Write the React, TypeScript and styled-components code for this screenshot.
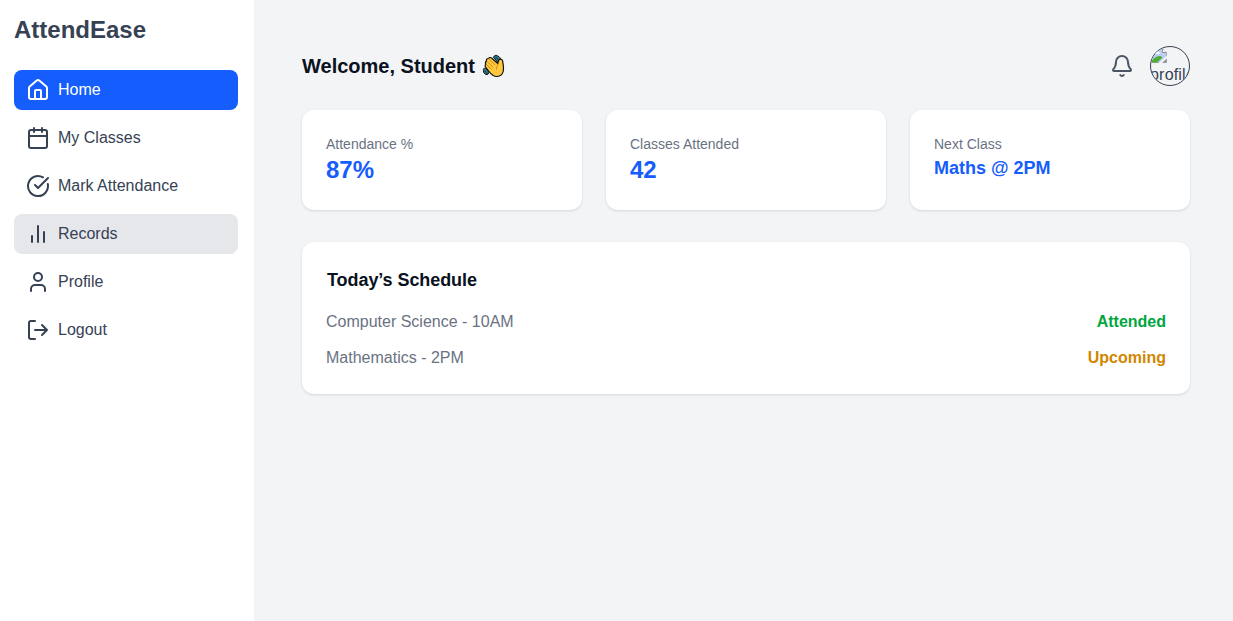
import React from "react";
import styled, { createGlobalStyle } from "styled-components";

const GlobalStyle = createGlobalStyle`
  *, *::before, *::after { box-sizing: border-box; }
  body {
    margin: 0;
    background: #f3f4f6;
    font-family: "Liberation Sans", Arial, sans-serif;
    font-size: 16px;
    line-height: 24px;
    color: #0a1120;
  }
  h1, h2, h3, p, ul { margin: 0; padding: 0; }
`;

const Layout = styled.div`
  display: flex;
  min-height: 100vh;
`;

const Sidebar = styled.aside`
  width: 254px;
  flex-shrink: 0;
  padding: 14px 16px 16px 14px;
  background: #fff;
  color: #364153;
`;

const Brand = styled.h1`
  font-size: 24px;
  line-height: 32px;
  font-weight: 700;
  margin-bottom: 24px;
`;

const Nav = styled.nav`
  display: flex;
  flex-direction: column;
  gap: 8px;
`;

const NavItem = styled.a<{ $state?: "active" | "hover" }>`
  display: flex;
  align-items: center;
  gap: 8px;
  height: 40px;
  padding: 0 12px;
  border-radius: 8px;
  color: ${(p) => (p.$state === "active" ? "#fff" : "#364153")};
  background: ${(p) =>
    p.$state === "active" ? "#155dfc" : p.$state === "hover" ? "#e5e7eb" : "transparent"};
`;

const NavLabel = styled.span`
  padding-bottom: 1px;
`;

const Icon = styled.svg.attrs({
  width: 24,
  height: 24,
  viewBox: "0 0 24 24",
  fill: "none",
  stroke: "currentColor",
  strokeWidth: 2,
  strokeLinecap: "round",
  strokeLinejoin: "round",
})`
  display: block;
  flex-shrink: 0;
`;

const Main = styled.main`
  flex: 1;
  padding: 46px 43px 48px 48px;
`;

const Header = styled.header`
  display: flex;
  justify-content: space-between;
  align-items: center;
  height: 40px;
  margin-bottom: 24px;
`;

const Greeting = styled.h2`
  display: flex;
  align-items: center;
  gap: 6px;
  font-size: 20px;
  line-height: 28px;
  font-weight: 700;
`;

const Wave = styled.svg`
  display: block;
  width: 24px;
  height: 24px;
`;

const Actions = styled.div`
  display: flex;
  align-items: center;
  gap: 16px;
  color: #4a5565;
`;

const Avatar = styled.div`
  width: 40px;
  height: 40px;
  border: 1px solid #364153;
  border-radius: 50%;
  overflow: hidden;
  color: #364153;
  line-height: 22px;
`;

const BrokenImage = styled.svg`
  display: block;
  width: 16px;
  height: 16px;
  margin-top: 1px;
`;

const AvatarAlt = styled.span`
  display: block;
  margin-left: -1px;
  letter-spacing: 0.2px;
`;

const Stats = styled.section`
  display: grid;
  grid-template-columns: repeat(3, 1fr);
  gap: 24px;
  margin-bottom: 32px;
`;

const Card = styled.div`
  background: #fff;
  border-radius: 12px;
  padding: 24px;
  box-shadow: 0 1px 3px rgba(0, 0, 0, 0.1), 0 1px 2px -1px rgba(0, 0, 0, 0.1);
`;

const StatCard = styled(Card)`
  height: 100px;
`;

const StatLabel = styled.p`
  font-size: 14px;
  line-height: 20px;
  color: #6a7282;
`;

const StatValue = styled.p<{ $small?: boolean }>`
  font-size: ${(p) => (p.$small ? 18 : 24)}px;
  line-height: ${(p) => (p.$small ? 28 : 32)}px;
  font-weight: 700;
  color: #155dfc;
`;

const ScheduleCard = styled(Card)`
  height: 152px;
`;

const CardTitle = styled.h3`
  font-size: 18px;
  line-height: 28px;
  font-weight: 700;
  letter-spacing: -0.07px;
  margin-bottom: 16px;
  padding-left: 1px;
`;

const ScheduleList = styled.ul`
  list-style: none;
  display: flex;
  flex-direction: column;
  gap: 12px;
`;

const ScheduleRow = styled.li`
  display: flex;
  justify-content: space-between;
  color: #6a7282;
`;

const Status = styled.span<{ $done?: boolean }>`
  font-weight: 700;
  color: ${(p) => (p.$done ? "#00a63e" : "#d08700")};
`;

const navItems: { label: string; state?: "active" | "hover"; icon: React.ReactNode }[] = [
  {
    label: "Home",
    state: "active",
    icon: (
      <>
        <path d="M15 21v-8a1 1 0 0 0-1-1h-4a1 1 0 0 0-1 1v8" />
        <path d="M3 10a2 2 0 0 1 .709-1.528l7-5.999a2 2 0 0 1 2.582 0l7 5.999A2 2 0 0 1 21 10v9a2 2 0 0 1-2 2H5a2 2 0 0 1-2-2z" />
      </>
    ),
  },
  {
    label: "My Classes",
    icon: (
      <>
        <path d="M8 2v4M16 2v4M3 10h18" />
        <rect width="18" height="18" x="3" y="4" rx="2" />
      </>
    ),
  },
  {
    label: "Mark Attendance",
    icon: (
      <>
        <path d="M21.801 10A10 10 0 1 1 17 3.335" />
        <path d="m9 11 3 3L22 4" />
      </>
    ),
  },
  { label: "Records", state: "hover", icon: <path d="M18 20V10M12 20V4M6 20v-6" /> },
  {
    label: "Profile",
    icon: (
      <>
        <path d="M19 21v-2a4 4 0 0 0-4-4H9a4 4 0 0 0-4 4v2" />
        <circle cx="12" cy="7" r="4" />
      </>
    ),
  },
  {
    label: "Logout",
    icon: <path d="M9 21H5a2 2 0 0 1-2-2V5a2 2 0 0 1 2-2h4M16 17l5-5-5-5M21 12H9" />,
  },
];

const schedule = [
  { name: "Computer Science - 10AM", status: "Attended", done: true },
  { name: "Mathematics - 2PM", status: "Upcoming", done: false },
];

function WavingHand() {
  return (
    <Wave viewBox="0 0 24 24" role="img" aria-label="waving hand">
      <g fill="#2f8290" stroke="#0c0f12" strokeWidth="1" strokeLinejoin="round">
        <path d="M12.500 3.200C13.300 1 15.500.8 17 2.200c1.800.8 2.700 2 2.600 3.800L16.500 8z" />
        <path d="M5 14.300c-2.200-.5-3.200.8-2.500 2.300-.4 2.300 1.700 4.300 4 4l1.600-2z" />
      </g>
      <path
        d="M14.300 3.200c1.700.5 2.600 1.600 3 3M3.800 16.500c.3 1.600 1.400 2.500 3 2.900"
        fill="none"
        stroke="#0c0f12"
        strokeWidth=".7"
      />
      <path
        d="M8 17.500 4.600 13c-.8-1.200-.5-2.200.4-2.700-.9-1.300-.7-2.600.4-3.200-.3-1.600.6-2.700 2.100-2.600.8-1.200 2.200-1.300 3.300-.3l6 5.300c.2-1.500.4-2.900 1.200-3.700 1.300-1.300 3.300-.6 3.600 1 .3 1.800.9 4.800.9 8.200 0 4.800-2.800 7.500-6.800 7.500-3.300 0-5.300-1.800-7.700-5Z"
        fill="#ffc83d"
        stroke="#0c0f12"
        strokeWidth="1.200"
        strokeLinejoin="round"
      />
      <path
        d="m5.500 10.500 4.700 4.500M6 7.300l6 5.900M8 4.900l6 6M17 10c-.2 1.800-2 3-1.600 5.200"
        fill="none"
        stroke="#c98a1c"
        strokeWidth=".9"
        strokeLinecap="round"
      />
    </Wave>
  );
}

export default function App() {
  return (
    <>
      <GlobalStyle />
      <Layout>
        <Sidebar>
          <Brand>AttendEase</Brand>
          <Nav>
            {navItems.map((item) => (
              <NavItem key={item.label} $state={item.state}>
                <Icon>{item.icon}</Icon>
                <NavLabel>{item.label}</NavLabel>
              </NavItem>
            ))}
          </Nav>
        </Sidebar>
        <Main>
          <Header>
            <Greeting>
              Welcome, Student
              <WavingHand />
            </Greeting>
            <Actions>
              <Icon>
                <path d="M10.268 21a2 2 0 0 0 3.464 0" />
                <path d="M3.262 15.326A1 1 0 0 0 4 17h16a1 1 0 0 0 .74-1.673C19.41 13.956 18 12.499 18 8A6 6 0 0 0 6 8c0 4.499-1.411 5.956-2.738 7.326" />
              </Icon>
              <Avatar>
                <BrokenImage viewBox="0 0 16 16">
                  <path d="M.5.5h11l4 4v10H.5z" fill="#b9cffa" stroke="#a4a7aa" />
                  <path d="M3 6a1.600 1.600 0 0 1 2.200-1.800A2 2 0 0 1 8.700 6z" fill="#fff" />
                  <path d="M0 14.500C2 10 5.500 8 9.500 8l2 1.500-5.500 5z" fill="#4fae33" />
                  <path d="M11.500.5v4h4" fill="#fff" stroke="#8b8e91" />
                  <path d="m7.500 15 8.500-7.500v3l-5 4.500z" fill="#f3f4f6" />
                  <path d="M11.500 14.500h4V11z" fill="#8f9295" />
                </BrokenImage>
                <AvatarAlt>profile</AvatarAlt>
              </Avatar>
            </Actions>
          </Header>
          <Stats>
            <StatCard>
              <StatLabel>Attendance %</StatLabel>
              <StatValue>87%</StatValue>
            </StatCard>
            <StatCard>
              <StatLabel>Classes Attended</StatLabel>
              <StatValue>42</StatValue>
            </StatCard>
            <StatCard>
              <StatLabel>Next Class</StatLabel>
              <StatValue $small>Maths @ 2PM</StatValue>
            </StatCard>
          </Stats>
          <ScheduleCard>
            <CardTitle>Today’s Schedule</CardTitle>
            <ScheduleList>
              {schedule.map((row) => (
                <ScheduleRow key={row.name}>
                  <span>{row.name}</span>
                  <Status $done={row.done}>{row.status}</Status>
                </ScheduleRow>
              ))}
            </ScheduleList>
          </ScheduleCard>
        </Main>
      </Layout>
    </>
  );
}
